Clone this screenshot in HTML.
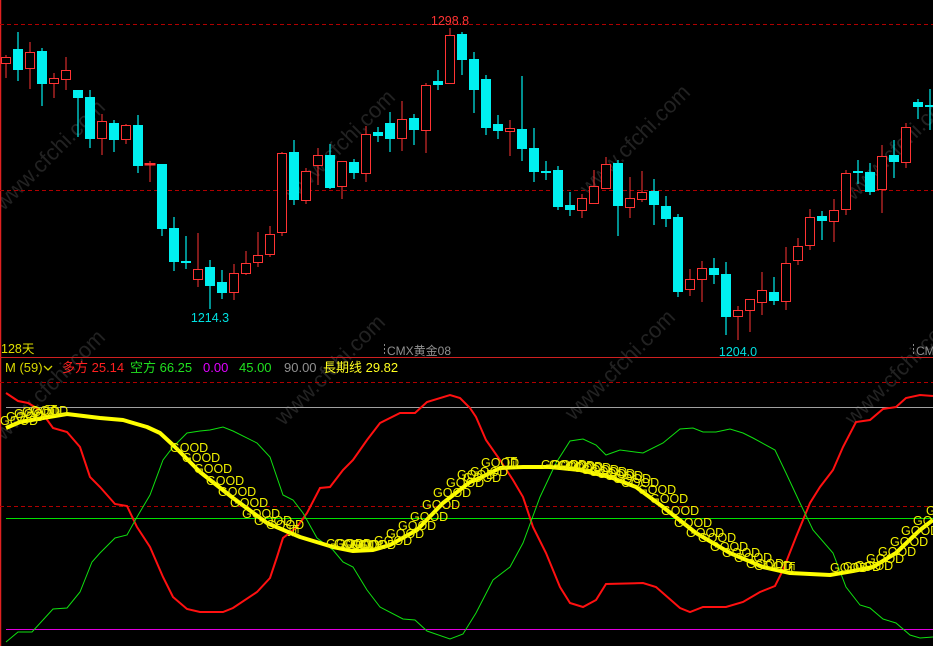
<!DOCTYPE html>
<html><head><meta charset="utf-8"><style>
html,body{margin:0;padding:0;background:#000;width:933px;height:646px;overflow:hidden}
svg{display:block}
text{font-family:"Liberation Sans","Noto Sans CJK SC",sans-serif}
</style></head><body>
<svg width="933" height="646" viewBox="0 0 933 646" xmlns="http://www.w3.org/2000/svg">
<rect width="933" height="646" fill="#000"/>
<g fill="#222" font-size="22" font-family="Liberation Sans,sans-serif">
<text transform="translate(55,160) rotate(-45)" text-anchor="middle">www.cfchi.com</text>
<text transform="translate(345,150) rotate(-45)" text-anchor="middle">www.cfchi.com</text>
<text transform="translate(640,145) rotate(-45)" text-anchor="middle">www.cfchi.com</text>
<text transform="translate(905,150) rotate(-45)" text-anchor="middle">www.cfchi.com</text>
<text transform="translate(55,390) rotate(-45)" text-anchor="middle">www.cfchi.com</text>
<text transform="translate(335,375) rotate(-45)" text-anchor="middle">www.cfchi.com</text>
<text transform="translate(625,370) rotate(-45)" text-anchor="middle">www.cfchi.com</text>
<text transform="translate(905,375) rotate(-45)" text-anchor="middle">www.cfchi.com</text>
</g>
<line x1="0.5" y1="0" x2="0.5" y2="646" stroke="#e02020" stroke-width="1.5"/>
<line x1="0" y1="357.5" x2="933" y2="357.5" stroke="#d02020" stroke-width="1"/>
<g stroke="#b00000" stroke-width="1" stroke-dasharray="4,3">
<line x1="0" y1="24.5" x2="933" y2="24.5"/>
<line x1="0" y1="190.5" x2="933" y2="190.5"/>
<line x1="0" y1="382.5" x2="933" y2="382.5"/>
<line x1="0" y1="506.5" x2="933" y2="506.5"/>
</g>
<line x1="6" y1="407.5" x2="933" y2="407.5" stroke="#a0a0a0"/>
<line x1="6" y1="518.5" x2="933" y2="518.5" stroke="#00e000"/>
<line x1="6" y1="629.5" x2="933" y2="629.5" stroke="#e000e0"/>

<g stroke="#ff3333" stroke-width="1" fill="#000">
<path d="M6 55V78M30 42V89M54 73V98M66 57V90M102 114V155M126 124V144M150 161V182M198 233V287M234 264V300M246 251V275M258 232V267M270 226V257M282 152V236M306 168V204M318 148V185M342 161V199M366 126V182M402 101V151M426 83V153M450 28V84M510 120V156M582 194V218M594 170V203M606 157V189M630 177V218M642 171V202M690 269V296M702 261V302M738 306V340M750 299V332M762 272V315M786 247V310M798 238V265M810 209V250M834 199V242M846 170V215M882 145V213M906 123V168"/>
<rect x="1.5" y="57.5" width="9" height="6"/>
<rect x="25.5" y="52.5" width="9" height="16"/>
<rect x="49.5" y="78.5" width="9" height="5"/>
<rect x="61.5" y="70.5" width="9" height="9"/>
<rect x="97.5" y="121.5" width="9" height="17"/>
<rect x="121.5" y="125.5" width="9" height="14"/>
<rect x="145" y="163.5" width="10" height="1.5" fill="#ff3333"/>
<rect x="193.5" y="269.5" width="9" height="10"/>
<rect x="229.5" y="273.5" width="9" height="19"/>
<rect x="241.5" y="263.5" width="9" height="10"/>
<rect x="253.5" y="255.5" width="9" height="7"/>
<rect x="265.5" y="234.5" width="9" height="20"/>
<rect x="277.5" y="153.5" width="9" height="79"/>
<rect x="301.5" y="171.5" width="9" height="29"/>
<rect x="313.5" y="155.5" width="9" height="10"/>
<rect x="337.5" y="161.5" width="9" height="25"/>
<rect x="361.5" y="134.5" width="9" height="39"/>
<rect x="397.5" y="119.5" width="9" height="19"/>
<rect x="421.5" y="85.5" width="9" height="45"/>
<rect x="445.5" y="35.5" width="9" height="48"/>
<rect x="505.5" y="128.5" width="9" height="3"/>
<rect x="577.5" y="198.5" width="9" height="12"/>
<rect x="589.5" y="186.5" width="9" height="17"/>
<rect x="601.5" y="164.5" width="9" height="24"/>
<rect x="625.5" y="198.5" width="9" height="9"/>
<rect x="637.5" y="192.5" width="9" height="7"/>
<rect x="685.5" y="279.5" width="9" height="10"/>
<rect x="697.5" y="268.5" width="9" height="11"/>
<rect x="733.5" y="310.5" width="9" height="6"/>
<rect x="745.5" y="299.5" width="9" height="11"/>
<rect x="757.5" y="290.5" width="9" height="12"/>
<rect x="781.5" y="263.5" width="9" height="38"/>
<rect x="793.5" y="246.5" width="9" height="14"/>
<rect x="805.5" y="217.5" width="9" height="28"/>
<rect x="829.5" y="210.5" width="9" height="11"/>
<rect x="841.5" y="173.5" width="9" height="36"/>
<rect x="877.5" y="156.5" width="9" height="33"/>
<rect x="901.5" y="127.5" width="9" height="35"/>
</g>
<g fill="#00f0f0">
<path stroke="#00f0f0" stroke-width="1.2" d="M18 32V81M42 48V106M78 90V137M90 90V148M114 120V152M138 115V173M162 164V236M174 217V271M186 236V269M210 260V309M222 270V299M294 140V205M330 144V189M354 159V179M378 127V142M390 112V152M414 114V145M438 70V90M462 32V75M474 52V113M486 75V135M498 115V139M522 76V161M534 128V182M546 161V180M558 166V210M570 192V216M618 160V236M654 179V225M666 196V227M678 214V297M714 258V284M726 262V335M774 277V305M822 211V240M858 160V184M870 163V195M894 140V178M918 99V119M930 89V130"/>
<rect x="13" y="49" width="10" height="21"/>
<rect x="37" y="51" width="10" height="33"/>
<rect x="73" y="90" width="10" height="8"/>
<rect x="85" y="97" width="10" height="42"/>
<rect x="109" y="123" width="10" height="17"/>
<rect x="133" y="125" width="10" height="41"/>
<rect x="157" y="164" width="10" height="65"/>
<rect x="169" y="228" width="10" height="34"/>
<rect x="181" y="261" width="10" height="2"/>
<rect x="205" y="267" width="10" height="19"/>
<rect x="217" y="282" width="10" height="11"/>
<rect x="289" y="152" width="10" height="48"/>
<rect x="325" y="155" width="10" height="33"/>
<rect x="349" y="162" width="10" height="11"/>
<rect x="373" y="132" width="10" height="4"/>
<rect x="385" y="123" width="10" height="16"/>
<rect x="409" y="118" width="10" height="12"/>
<rect x="433" y="81" width="10" height="4"/>
<rect x="457" y="34" width="10" height="26"/>
<rect x="469" y="59" width="10" height="31"/>
<rect x="481" y="79" width="10" height="49"/>
<rect x="493" y="124" width="10" height="7"/>
<rect x="517" y="129" width="10" height="20"/>
<rect x="529" y="148" width="10" height="24"/>
<rect x="541" y="171" width="10" height="2"/>
<rect x="553" y="170" width="10" height="37"/>
<rect x="565" y="205" width="10" height="5"/>
<rect x="613" y="163" width="10" height="43"/>
<rect x="649" y="191" width="10" height="14"/>
<rect x="661" y="206" width="10" height="13"/>
<rect x="673" y="217" width="10" height="75"/>
<rect x="709" y="268" width="10" height="7"/>
<rect x="721" y="274" width="10" height="43"/>
<rect x="769" y="292" width="10" height="9"/>
<rect x="817" y="216" width="10" height="5"/>
<rect x="853" y="171" width="10" height="2"/>
<rect x="865" y="172" width="10" height="20"/>
<rect x="889" y="155" width="10" height="7"/>
<rect x="913" y="102" width="10" height="5"/>
<rect x="925" y="105" width="10" height="2"/>
</g>
<g font-size="12.5">
<text x="450" y="25" fill="#ff3333" text-anchor="middle">1298.8</text>
<text x="210" y="322" fill="#00e0e0" text-anchor="middle">1214.3</text>
<text x="738" y="356" fill="#00e0e0" text-anchor="middle">1204.0</text>
<text x="1" y="353" fill="#e0e000">128天</text>
<line x1="384.5" y1="344" x2="384.5" y2="356" stroke="#888" stroke-dasharray="2,2"/>
<text x="387" y="355" fill="#909090" font-size="12">CMX黄金08</text>
<line x1="913.5" y1="344" x2="913.5" y2="356" stroke="#888" stroke-dasharray="2,2"/>
<text x="916" y="355" fill="#909090" font-size="12">CMX</text>
</g>
<g font-size="13">
<text x="5" y="372" fill="#d8d800">M (59)</text>
<path d="M44 366l4 4 4-4" stroke="#d8d800" fill="none" stroke-width="1.3"/>
<text x="62" y="372" fill="#ff2020">多方 25.14</text>
<text x="130" y="372" fill="#20e020">空方 66.25</text>
<text x="203" y="372" fill="#e000ff">0.00</text>
<text x="239" y="372" fill="#20e020">45.00</text>
<text x="284" y="372" fill="#909090">90.00</text>
<text x="323" y="372" fill="#ffff20">長期线 29.82</text>
</g>
<polyline fill="none" stroke="#ff1010" stroke-width="2" points="6,393 18,401 28,403 40,410 53,428 67,432 80,447 90,477 100,487 115,504 127,506 137,527 150,547 163,577 173,597 187,609 200,612 223,612 233,608 257,592 270,578 277,557 283,538 297,527 307,513 320,488 330,487 343,470 353,460 367,440 380,423 400,413 415,413 427,402 450,395 460,398 470,408 476,417 486,440 500,460 513,480 523,497 533,527 546,553 560,587 570,603 583,607 596,600 606,584 643,583 656,587 680,608 690,612 703,607 726,607 743,602 760,592 775,586 783,570 796,537 810,503 820,487 833,470 843,447 856,422 870,420 883,409 896,407 906,398 920,395 933,396"/>
<polyline fill="none" stroke="#10e010" stroke-width="1" points="6,642 18,632 32,632 53,609 67,608 80,592 92,562 100,553 115,538 127,535 137,517 150,495 163,460 173,447 187,433 200,431 210,430 223,427 233,431 257,443 270,457 283,495 293,500 303,513 317,538 333,550 343,562 353,567 367,590 380,607 403,619 415,620 427,631 450,639 463,634 476,613 493,580 510,567 523,543 540,497 556,463 570,441 583,439 596,445 606,455 620,450 643,453 663,443 680,429 693,428 703,432 716,432 730,429 743,433 753,438 775,450 786,473 800,503 813,530 833,553 846,587 860,605 870,608 883,619 896,623 910,635 920,638 933,637"/>
<polyline fill="none" stroke="#ffff00" stroke-width="4" stroke-linejoin="round" points="6,428 20,422 43,418 67,414 100,418 123,420 147,427 160,433 173,445 200,472 233,498 267,523 300,537 333,547 353,551 373,550 390,545 417,530 443,503 470,482 480,478 500,468 523,467 550,467 580,470 610,477 636,487 663,507 696,533 730,553 763,567 790,573 830,575 853,571 873,567 896,553 920,530 933,520"/>
<g fill="#f0f000" font-size="12.5">
<text x="0" y="425">GOOD</text><text x="6" y="421">GOOD</text><text x="14" y="418">GOOD</text><text x="22" y="416">GOOD</text><text x="30" y="415">GOOD</text><text x="45" y="415">顶</text>
<text x="170" y="452">GOOD</text><text x="182" y="462">GOOD</text><text x="194" y="473">GOOD</text><text x="206" y="485">GOOD</text><text x="218" y="496">GOOD</text><text x="230" y="507">GOOD</text><text x="242" y="518">GOOD</text><text x="254" y="525">GOOD</text><text x="266" y="529">GOOD</text><text x="287" y="535">顶</text>
<text x="326" y="548">GOOD</text><text x="334" y="548">GOOD</text><text x="342" y="549">GOOD</text><text x="350" y="549">GOOD</text><text x="358" y="549">GOOD</text>
<text x="374" y="545">GOOD</text><text x="386" y="538">GOOD</text><text x="398" y="530">GOOD</text><text x="410" y="521">GOOD</text><text x="422" y="509">GOOD</text><text x="433" y="497">GOOD</text><text x="446" y="487">GOOD</text><text x="457" y="479">GOOD</text><text x="463" y="482">GOOD</text><text x="470" y="476">GOOD</text><text x="481" y="467">GOOD</text><text x="505" y="467">顶</text>
<text x="541" y="469">GOOD</text><text x="549" y="469">GOOD</text><text x="557" y="470">GOOD</text><text x="565" y="471">GOOD</text><text x="573" y="472">GOOD</text><text x="581" y="474">GOOD</text><text x="589" y="476">GOOD</text><text x="597" y="478">GOOD</text><text x="605" y="480">GOOD</text><text x="613" y="483">GOOD</text><text x="621" y="487">GOOD</text>
<text x="638" y="494">GOOD</text><text x="650" y="503">GOOD</text><text x="661" y="515">GOOD</text><text x="674" y="527">GOOD</text><text x="686" y="537">GOOD</text><text x="698" y="542">GOOD</text><text x="710" y="551">GOOD</text><text x="722" y="557">GOOD</text><text x="734" y="562">GOOD</text><text x="746" y="568">GOOD</text><text x="754" y="570">GOOD</text><text x="783" y="572">顶</text>
<text x="830" y="572">GOOD</text><text x="843" y="571">GOOD</text><text x="855" y="570">GOOD</text><text x="866" y="563">GOOD</text><text x="878" y="556">GOOD</text><text x="890" y="546">GOOD</text><text x="901" y="535">GOOD</text><text x="913" y="525">GOOD</text><text x="926" y="515">GOOD</text>
</g>
</svg>
</body></html>
